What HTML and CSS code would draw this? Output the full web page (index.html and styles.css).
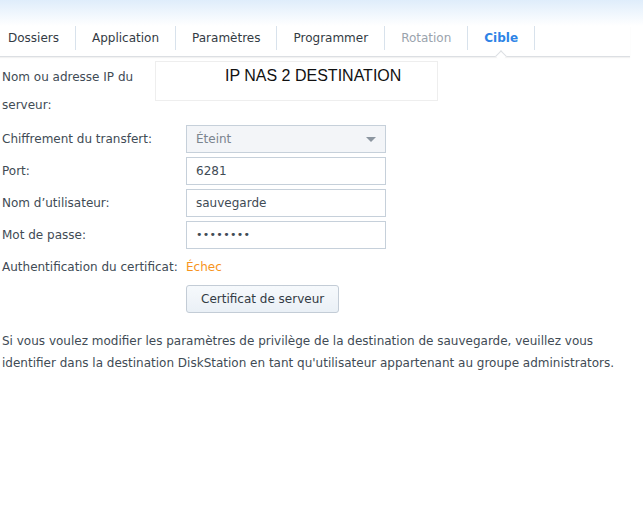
FILE: index.html
```html
<!DOCTYPE html>
<html lang="fr">
<head>
    <meta charset="UTF-8">
    <title>Cible</title>
    <link rel="stylesheet" href="styles.css">
</head>
<body>
    <div class="top"></div>
    <div class="tabs">
        <div class="tab first">Dossiers</div>
        <div class="tab">Application</div>
        <div class="tab">Paramètres</div>
        <div class="tab">Programmer</div>
        <div class="tab disabled">Rotation</div>
        <div class="tab active">Cible</div>
    </div>

    <div class="form">
        <div class="row server">
            <label class="server-label">Nom ou adresse IP du serveur:</label>
            <div class="ip-box">IP NAS 2 DESTINATION</div>
        </div>
        <div class="row">
            <label>Chiffrement du transfert:</label>
            <div class="field select">Éteint<span class="caret"></span></div>
        </div>
        <div class="row">
            <label>Port:</label>
            <div class="field">6281</div>
        </div>
        <div class="row">
            <label>Nom d’utilisateur:</label>
            <div class="field">sauvegarde</div>
        </div>
        <div class="row">
            <label>Mot de passe:</label>
            <div class="field dots">••••••••</div>
        </div>
        <div class="row plain">
            <label>Authentification du certificat:</label>
            <span class="fail">Échec</span>
        </div>
        <div class="row plain">
            <label></label>
            <button class="btn">Certificat de serveur</button>
        </div>
    </div>

    <p class="note">Si vous voulez modifier les paramètres de privilège de la destination de sauvegarde, veuillez vous identifier dans la destination DiskStation en tant qu'utilisateur appartenant au groupe administrators.</p>
</body>
</html>
```

FILE: styles.css
```css
body {
    margin: 0;
    font-family: "DejaVu Sans", Verdana, sans-serif;
    font-size: 12px;
    color: #414b55;
    background: #fff;
    width: 643px;
    height: 521px;
    overflow: hidden;
}

.top {
    height: 26px;
    background: linear-gradient(#dfedfb, #ffffff);
}

.tabs {
    display: flex;
    width: 630px;
    height: 30px;
    border-bottom: 1px solid #dcdfe3;
    box-shadow: 0 1px 1px rgba(0, 0, 0, 0.05);
}

.tab {
    position: relative;
    height: 24px;
    line-height: 24px;
    padding: 0 16px;
    border-right: 1px solid #d8e2ec;
    color: #333b44;
    font-size: 12px;
}

.tab.first {
    padding-left: 8px;
}

.tab.disabled {
    color: #9aa3ad;
}

.tab.active {
    color: #2d83e6;
    font-weight: bold;
}

.tab.active::after {
    content: "";
    position: absolute;
    left: 50%;
    bottom: -10px;
    width: 7px;
    height: 7px;
    margin-left: -4px;
    background: #fff;
    border-top: 1px solid #dcdfe3;
    border-left: 1px solid #dcdfe3;
    transform: rotate(45deg);
}

.form {
    padding: 6px 0 0 2px;
}

.row {
    display: flex;
    align-items: center;
    height: 28px;
    margin-bottom: 4px;
}

.row label {
    width: 184px;
    flex-shrink: 0;
}

.row.server {
    height: 56px;
    align-items: flex-start;
    margin-bottom: 6px;
}

.row.server label {
    width: 153px;
    line-height: 28px;
}

.ip-box {
    width: 283px;
    height: 40px;
    margin-top: -2px;
    border: 1px solid #eeeeee;
    font-family: "Liberation Sans", Arial, sans-serif;
    font-size: 16px;
    color: #111;
    padding: 5px 0 0 69px;
    box-sizing: border-box;
}

.field {
    width: 200px;
    height: 28px;
    box-sizing: border-box;
    border: 1px solid #c6d0da;
    padding: 0 9px;
    line-height: 26px;
    color: #414b55;
}

.select {
    position: relative;
    background: #f3f5f8;
    color: #7a848e;
}

.caret {
    position: absolute;
    right: 9px;
    top: 11px;
    border-left: 5px solid transparent;
    border-right: 5px solid transparent;
    border-top: 5px solid #8c96a0;
}

.dots {
    font-size: 11px;
    letter-spacing: 0.3px;
}

.row.plain {
    margin-top: 2px;
}

.fail {
    color: #f7941d;
}

.btn {
    height: 28px;
    padding: 0 14px;
    font-family: inherit;
    font-size: 12px;
    color: #333b44;
    background: linear-gradient(#f6f9fc, #eaf0f6);
    border: 1px solid #c3ccd6;
    border-radius: 3px;
    margin-top: 0;
}

.note {
    margin: 17px 0 0 2px;
    line-height: 22px;
    width: 630px;
}
```
